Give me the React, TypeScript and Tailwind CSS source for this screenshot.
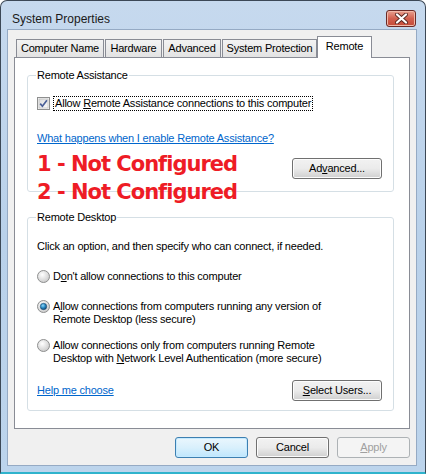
import type { ReactNode } from "react";

const body = { fontFamily: '"Liberation Sans", Arial, sans-serif' };

function Tab({ label, width, active }: { label: string; width: string; active?: boolean }) {
  if (active) {
    return (
      <div
        className={`relative z-10 -mb-px -ml-[1px] flex h-[22px] items-start justify-center border border-b-0 border-[#898c95] bg-white pt-[3px] text-[11px] leading-[13px] text-black ${width}`}
      >
        {label}
      </div>
    );
  }
  return (
    <div
      className={`mr-[1px] flex h-[18px] items-center justify-center border border-b-0 border-[#898c95] bg-gradient-to-b from-[#f3f3f3] to-[#e3e3e3] text-[11px] leading-[13px] text-black ${width}`}
    >
      {label}
    </div>
  );
}

function Button({
  children,
  className = "",
  variant = "normal",
}: {
  children: ReactNode;
  className?: string;
  variant?: "normal" | "default" | "disabled";
}) {
  const look =
    variant === "default"
      ? "border-[#3c7fb1] bg-gradient-to-b from-[#eaf6fd] via-[#d9f0fc] to-[#bee6fd] shadow-[inset_0_0_0_1px_#c5eaff] text-black"
      : variant === "disabled"
        ? "border-[#adb2b5] bg-[#f4f4f4] text-[#a0a0a0]"
        : "border-[#707070] bg-gradient-to-b from-[#f2f2f2] via-[#ebebeb] to-[#cfcfcf] shadow-[inset_0_0_0_1px_#fcfcfc] text-black";
  return (
    <div
      className={`flex h-[21px] items-center justify-center rounded-[3px] border text-[11px] leading-[13px] ${look} ${className}`}
    >
      {children}
    </div>
  );
}

function CheckBox() {
  return (
    <svg width="13" height="13" viewBox="0 0 13 13" className="shrink-0">
      <defs>
        <linearGradient id="cb" x1="0" y1="0" x2="1" y2="1">
          <stop offset="0" stopColor="#dcdcdc" />
          <stop offset="1" stopColor="#fbfbfb" />
        </linearGradient>
      </defs>
      <rect x="0.5" y="0.5" width="12" height="12" fill="#f4f4f4" stroke="#8e8f8f" />
      <rect x="2" y="2" width="9" height="9" fill="url(#cb)" stroke="#b4b4b4" strokeWidth="0.6" />
      <path d="M3.2 6.6 L5.4 9.2 L9.9 3.2" fill="none" stroke="#4a5f97" strokeWidth="1.7" />
    </svg>
  );
}

function Radio({ checked }: { checked?: boolean }) {
  return (
    <svg width="13" height="13" viewBox="0 0 13 13" className="shrink-0">
      <defs>
        <radialGradient id="rg" cx="0.4" cy="0.35" r="0.7">
          <stop offset="0" stopColor="#ffffff" />
          <stop offset="1" stopColor="#c8c8c8" />
        </radialGradient>
        <radialGradient id="rd" cx="0.4" cy="0.35" r="0.7">
          <stop offset="0" stopColor="#8fd6f8" />
          <stop offset="0.5" stopColor="#2a8bc4" />
          <stop offset="1" stopColor="#0c3e6a" />
        </radialGradient>
      </defs>
      <circle cx="6.5" cy="6.5" r="6" fill="url(#rg)" stroke="#8e8f8f" />
      {checked && <circle cx="6.5" cy="6.5" r="3.2" fill="url(#rd)" stroke="#1d4a72" strokeWidth="0.6" />}
    </svg>
  );
}

function Group({ title, children, className = "" }: { title: string; children: ReactNode; className?: string }) {
  return (
    <fieldset className={`ml-[12px] w-[367px] rounded-[3px] border border-[#d5dfe5] px-[8px] ${className}`}>
      <legend className="px-[1px] text-[11px] leading-[13px] text-black">{title}</legend>
      {children}
    </fieldset>
  );
}

export default function App() {
  return (
    <div
      className="relative h-[474px] w-[426px] overflow-hidden rounded-t-[7px] border border-b-2 border-[#3c4856] border-b-[#2fb3cc] bg-gradient-to-b from-[#c6d9ee] via-[#b9d1ea] to-[#bcd4ec] tracking-[-0.2px]"
      style={body}
    >
      {/* title bar */}
      <div className="flex h-[28px] items-start justify-between">
        <div className="pl-[11px] pt-[10px] text-[12px] leading-[16px] tracking-normal text-[#1a1a1a]">System Properties</div>
        <div className="mr-[9px] mt-[9px] flex h-[17px] w-[30px] items-center justify-center rounded-[3px] border border-[#6b2a26] bg-gradient-to-b from-[#e8a090] via-[#d2604f] to-[#c44a38] shadow-[inset_0_0_0_1px_#f0b8a8]">
          <svg width="13" height="11" viewBox="0 0 13 11">
            <path d="M2 1.5 L11 9.5 M11 1.5 L2 9.5" stroke="#5a2a24" strokeWidth="4" strokeLinecap="round" />
            <path d="M2 1.5 L11 9.5 M11 1.5 L2 9.5" stroke="#ffffff" strokeWidth="2.2" strokeLinecap="round" />
          </svg>
        </div>
      </div>

      {/* client area */}
      <div className="ml-[6px] h-[437px] w-[410px] border border-[#95aac4] bg-[#f0f0f0] px-[6px] pt-[6px]">
        <div className="flex h-[21px] items-end pl-[2px]">
          <Tab label="Computer Name" width="w-[88px]" />
          <Tab label="Hardware" width="w-[57px]" />
          <Tab label="Advanced" width="w-[58px]" />
          <Tab label="System Protection" width="w-[95px]" />
          <Tab label="Remote" width="w-[55px]" active />
        </div>

        <div className="relative h-[372px] w-[396px] border border-[#898c95] bg-white pt-[11px] text-[11px] leading-[13px] text-black">
          <Group title="Remote Assistance" className="pb-[12px] pt-[13px]">
            <div className="flex h-[17px] items-center gap-[3px] pl-[1px]">
              <CheckBox />
              <span className="border border-dotted border-black px-[1px] leading-[13px]">
                Allow <span className="underline">R</span>emote Assistance connections to this computer
              </span>
            </div>
            <div className="mt-[20px] pl-[1px] text-[#0066cc] underline">
              What happens when I enable Remote Assistance?
            </div>
            <div className="mt-[13px] flex justify-end pr-[3px]">
              <Button className="w-[90px]">
                Ad<span className="underline">v</span>anced...
              </Button>
            </div>
          </Group>

          <Group title="Remote Desktop" className="mt-[19px] pb-[9px] pt-[16px]">
            <div className="pl-[1px]">Click an option, and then specify who can connect, if needed.</div>
            <div className="mt-[17px] flex items-start gap-[3px] pl-[1px]">
              <Radio />
              <span>
                D<span className="underline">o</span>n't allow connections to this computer
              </span>
            </div>
            <div className="mt-[17px] flex items-start gap-[3px] pl-[1px]">
              <Radio checked />
              <span>
                A<span className="underline">l</span>low connections from computers running any version of
                <br />
                Remote Desktop (less secure)
              </span>
            </div>
            <div className="mt-[13px] flex items-start gap-[3px] pl-[1px]">
              <Radio />
              <span>
                Allow connections only from computers running Remote
                <br />
                Desktop with <span className="underline">N</span>etwork Level Authentication (more secure)
              </span>
            </div>
            <div className="mt-[15px] flex items-center justify-between pl-[1px] pr-[3px]">
              <span className="text-[#0066cc] underline">Help me choose</span>
              <Button className="w-[90px]">
                <span className="underline">S</span>elect Users...
              </Button>
            </div>
          </Group>

          {/* red annotation drawn over the dialog */}
          <div
            className="absolute left-[22px] top-[92px] text-[21px] font-bold leading-[28px] tracking-[-1px] text-[#ee1c25]"
            style={{ fontFamily: '"DejaVu Sans", Verdana, sans-serif' }}
          >
            <div>1 - Not Configured</div>
            <div>2 - Not Configured</div>
          </div>
        </div>

        <div className="mt-[8px] flex justify-end gap-[8px]">
          <Button variant="default" className="w-[73px]">
            OK
          </Button>
          <Button className="w-[73px]">Cancel</Button>
          <Button variant="disabled" className="w-[73px]">
            <span className="underline">A</span>pply
          </Button>
        </div>
      </div>
    </div>
  );
}
